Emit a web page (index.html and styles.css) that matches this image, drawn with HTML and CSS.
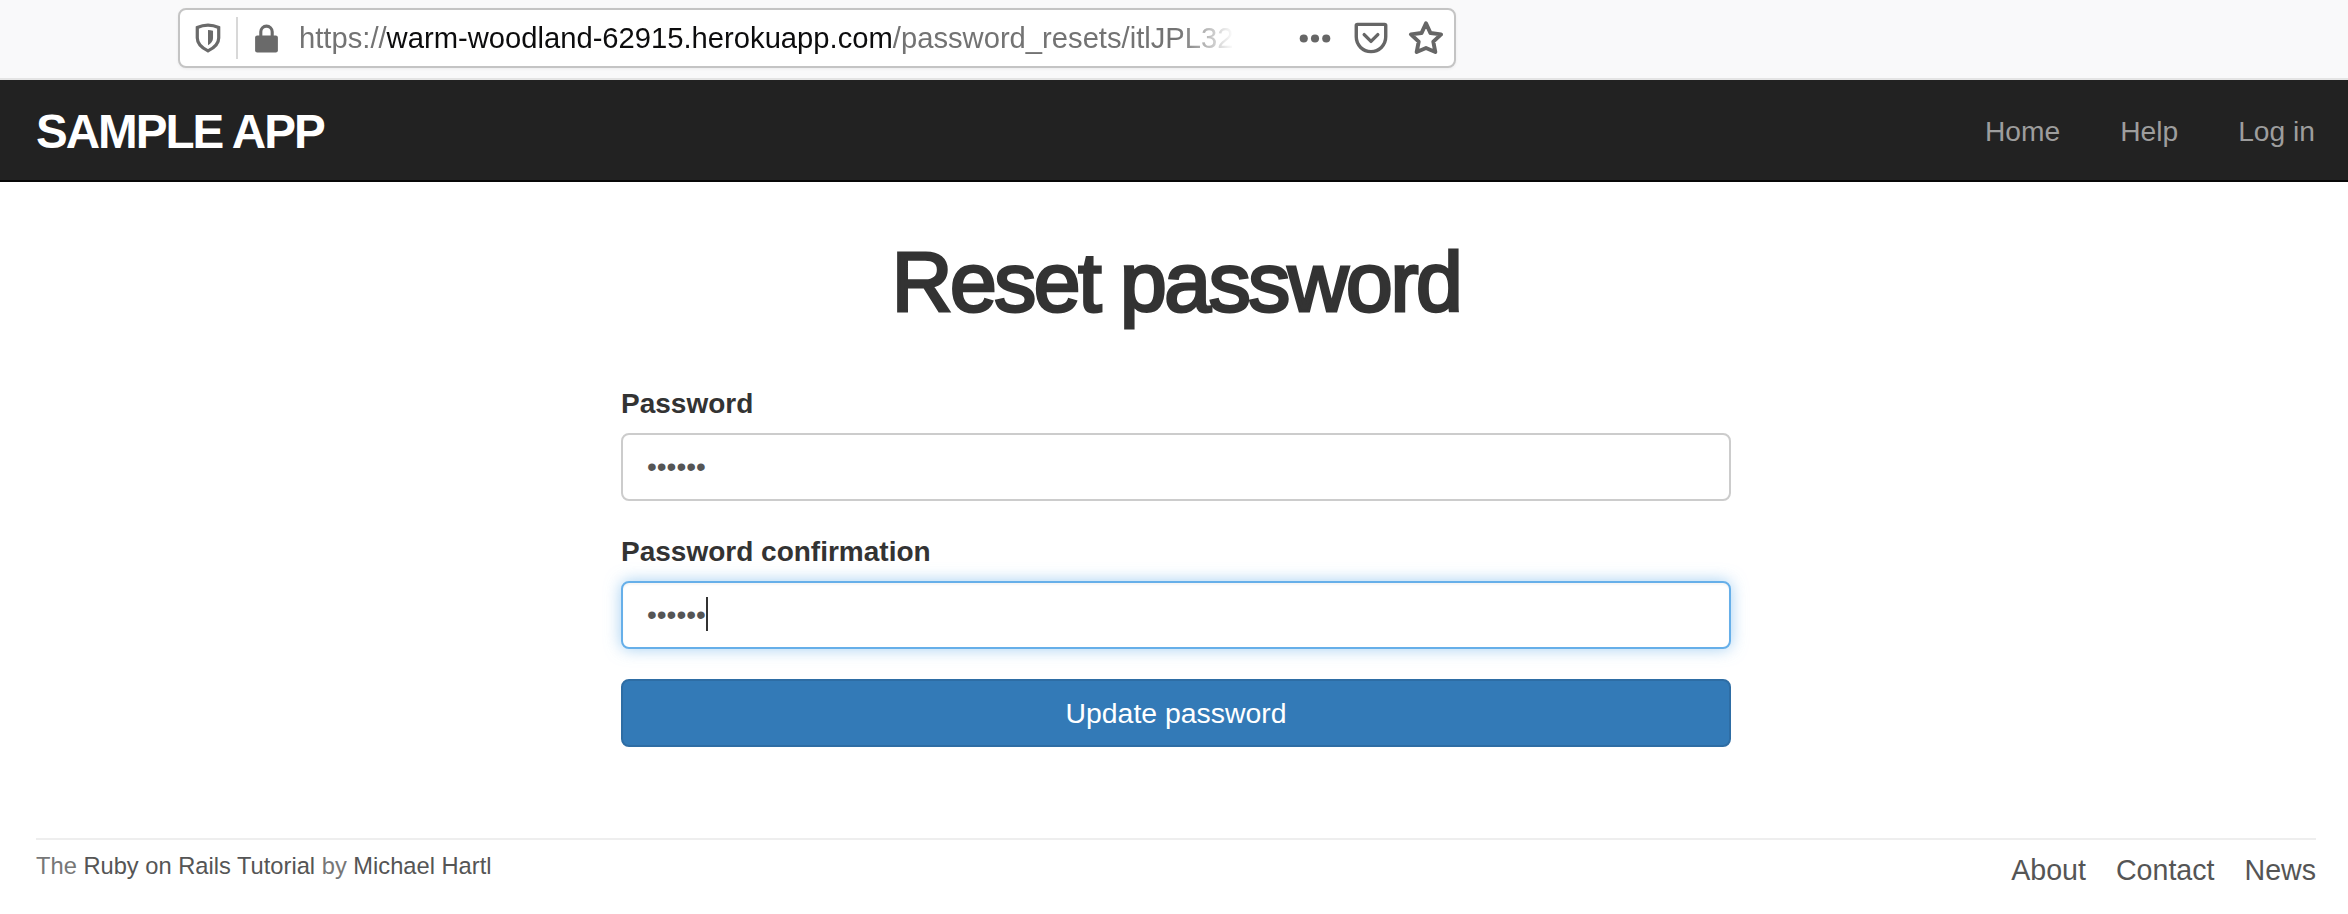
FILE: index.html
```html
<!DOCTYPE html>
<html lang="en">
<head>
<meta charset="utf-8">
<title>Reset password | Ruby on Rails Tutorial Sample App</title>
<link rel="stylesheet" href="styles.css">
</head>
<body>
<div class="chrome">
  <div class="urlbar">
    <svg class="ico shield" viewBox="0 0 24 28"><path d="M12 2c3.200 0 6.700.7 10 2.200v9.800c0 5-3.800 9-10 12C5.800 23 2 19 2 14V4.200C5.300 2.700 8.800 2 12 2z" fill="none" stroke="#6a6a6a" stroke-width="3"/><path d="M12 6.500c1.600 0 3.100.3 4.700.8v6.700c0 2.800-1.700 5-4.700 6.800z" fill="#6a6a6a"/></svg>
    <span class="sep"></span>
    <svg class="ico lock" viewBox="0 0 24 28"><path d="M6.500 12V7.500a5.500 5.500 0 0 1 11 0V12" fill="none" stroke="#6a6a6a" stroke-width="3"/><rect x="1" y="11" width="22" height="16.500" rx="2" fill="#6a6a6a"/></svg>
    <div class="url"><span class="dim">https://</span>warm-woodland-62915.herokuapp.com<span class="dim">/password_resets/itlJPL32</span></div>
    <div class="actions">
      <svg class="ico more" viewBox="0 0 28 8"><circle cx="4" cy="4" r="3.600" fill="#666"/><circle cx="14" cy="4" r="3.600" fill="#666"/><circle cx="24" cy="4" r="3.600" fill="#666"/></svg>
      <svg class="ico pocket" viewBox="0 0 30 30"><path d="M3 3h24a1 1 0 0 1 1 1v10c0 7.500-6 13-13 13S2 21.500 2 14V4a1 1 0 0 1 1-1z" fill="none" stroke="#666" stroke-width="3"/><path d="M9 12l6 6 6-6" fill="none" stroke="#666" stroke-width="3" stroke-linecap="round" stroke-linejoin="round"/></svg>
      <svg class="ico star" viewBox="0 0 32 32"><path d="M16 3l4 8.600 9.400 1.200-6.900 6.400 1.800 9.300L16 24.900l-8.300 3.600 1.800-9.300-6.900-6.400 9.400-1.200z" fill="none" stroke="#666" stroke-width="3.500" stroke-linejoin="round"/></svg>
    </div>
  </div>
</div>
<header class="navbar">
  <a class="logo" href="#">Sample App</a>
  <nav class="navlinks">
    <a href="#">Home</a>
    <a href="#">Help</a>
    <a href="#">Log in</a>
  </nav>
</header>
<main class="content">
  <h1 class="title">Reset password</h1>
  <form class="form">
    <label class="label" for="pw">Password</label>
    <input class="field" id="pw" type="password" value="secret">
    <label class="label" for="pwc">Password confirmation</label>
    <div class="focus-wrap">
      <input class="field focused" id="pwc" type="password" value="secret">
      <span class="caret"></span>
    </div>
    <button class="btn" type="button">Update password</button>
  </form>
</main>
<footer class="footer">
  <small class="credit">The <a href="#">Ruby on Rails Tutorial</a> by <a href="#">Michael Hartl</a></small>
  <nav class="footlinks">
    <a href="#">About</a>
    <a href="#">Contact</a>
    <a href="#">News</a>
  </nav>
</footer>
</body>
</html>
```
FILE: styles.css
```css
* { box-sizing: border-box; }
html, body { margin: 0; padding: 0; height: 914px; overflow: hidden; }
body { background: #fff; color: #333; font-family: "Liberation Sans", Arial, sans-serif; font-size: 28px; }
a { text-decoration: none; color: inherit; }

.chrome { height: 80px; background: #f9f9fa; border-bottom: 2px solid #e4e4e4; padding: 8px 0 0 178px; }
.urlbar { width: 1278px; height: 60px; background: #fff; border: 2px solid #c4c4c4; border-radius: 8px; display: flex; align-items: center; padding: 0 10px 0 0; box-shadow: 0 1px 3px rgba(0,0,0,.06); }
.ico { display: block; flex: none; }
.shield { width: 26px; height: 30px; margin-left: 15px; }
.sep { width: 2px; height: 42px; background: #d8d8d8; margin-left: 15px; }
.lock { width: 25px; height: 29px; margin-left: 16px; }
.url { width: 970px; margin-left: 20px; font-size: 29.200px; color: #0c0c0d; white-space: nowrap; -webkit-mask-image: linear-gradient(to right, #000 880px, transparent 935px); mask-image: linear-gradient(to right, #000 880px, transparent 935px); }
.dim { color: #737373; }
.actions { margin-left: auto; display: flex; align-items: center; gap: 20px; }
.more { width: 32px; height: 9px; margin-right: 3px; }
.pocket { width: 34px; height: 34px; }
.star { width: 36px; height: 36px; }

.navbar { height: 102px; background: #222; border-bottom: 2px solid #080808; padding: 2px 33px 0 36px; display: flex; align-items: center; justify-content: space-between; }
.logo { color: #fff; font-size: 47.6px; font-weight: bold; letter-spacing: -2px; text-transform: uppercase; }
.navlinks { display: flex; gap: 60px; color: #9d9d9d; font-size: 28.200px; }

.content { display: flex; flex-direction: column; align-items: center; padding-left: 4px; }
.title { margin: 54px 0 0; font-size: 84px; line-height: 1.1; font-weight: normal; letter-spacing: -2.400px; -webkit-text-stroke: 3px #333; color: #333; }
.form { width: 1110px; margin-top: 55px; display: flex; flex-direction: column; }
.label { font-weight: bold; font-size: 28px; line-height: 40px; padding-top: 1px; margin-bottom: 9px; }
.field { display: block; width: 100%; height: 68px; padding: 0 24px; border: 2px solid #ccc; border-radius: 8px; background: #fff; color: #555; font-family: inherit; font-size: 28px; margin-bottom: 30px; outline: none; }
.focus-wrap { position: relative; }
.focused { border-color: #66afe9; box-shadow: inset 0 2px 2px rgba(0,0,0,.04), 0 0 16px rgba(102,175,233,.6); }
.caret { position: absolute; left: 85px; top: 16px; width: 2px; height: 34px; background: #333; }
.btn { height: 68px; background: #337ab7; border: 2px solid #2e6da4; border-radius: 8px; color: #fff; font-family: inherit; font-size: 28.400px; }

.footer { position: absolute; left: 36px; right: 32px; top: 838px; height: 76px; border-top: 2px solid #eee; display: flex; justify-content: space-between; align-items: flex-start; color: #777; }
.credit { font-size: 23.700px; padding-top: 13px; }
.credit a { color: #555; }
.footlinks { display: flex; gap: 30px; color: #555; font-size: 28.600px; padding-top: 14px; }
```
